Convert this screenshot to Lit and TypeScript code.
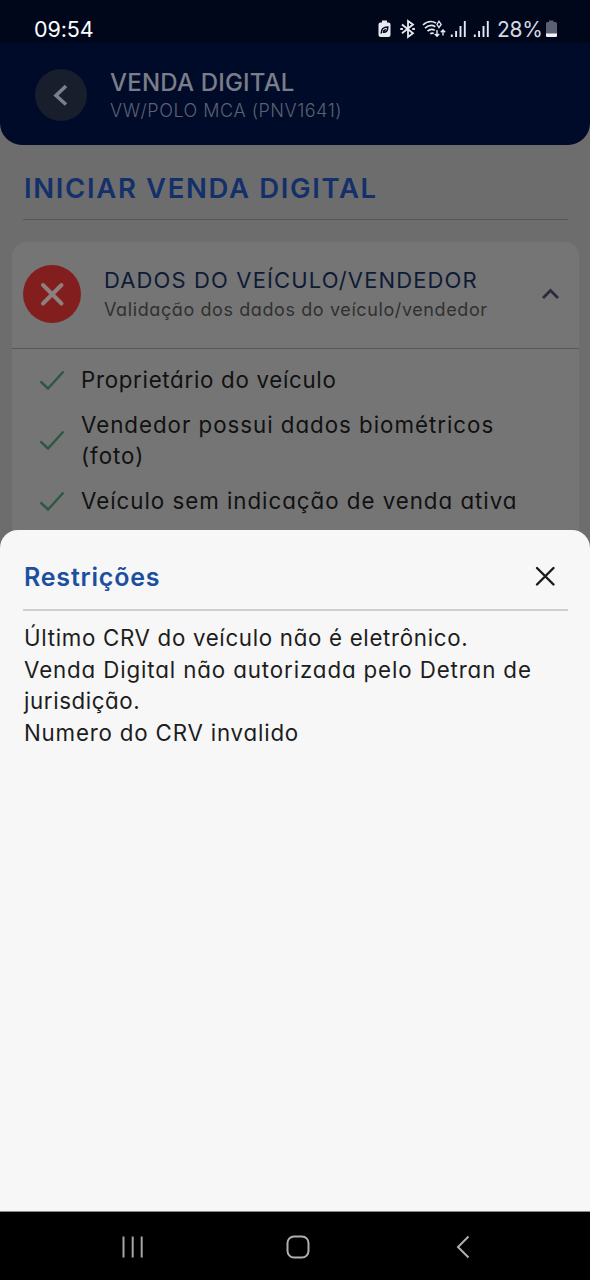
import { LitElement, html, css, svg } from "lit";
import { customElement } from "lit/decorators.js";

@customElement("status-bar")
class StatusBar extends LitElement {
  static styles = css`
    :host { display: flex; height: 43px; padding: 15px 32px 0 34px; box-sizing: border-box; background: #00071a; color: #f2f4fa; justify-content: space-between; }
    .clock { font: 400 21.5px/29px Inter, sans-serif; letter-spacing: -0.1px; color: #fff; }
    .right { display: flex; height: 29px; align-items: center; }
    svg { display: block; }
    .pct { font: 400 21px/29px Inter, sans-serif; letter-spacing: -0.3px; color: #d5d8e2; width: 48px; white-space: nowrap; }
  `;
  render() {
    const bars = (x: number) => svg`<path d="M${x} 22v-2.500M${x + 4.3} 22v-6M${x + 8.7} 22v-11M${x + 13} 22v-16"/>`;
    return html`
      <span class="clock">09:54</span>
      <div class="right">
        <svg width="120" height="29" viewBox="0 0 120 29" fill="none" stroke="#e6e9f2" stroke-width="1.8">
          <g transform="translate(1.500 0)">
            <path d="M3.500 5.500h5v2h1.500a2 2 0 0 1 2 2v10.500a2 2 0 0 1-2 2h-8a2 2 0 0 1-2-2v-10.500a2 2 0 0 1 2-2h1.500z" fill="#e6e9f2" stroke="none"/>
            <path d="M2.700 18.500c0-5 2-6.500 6.600-6.500c0 4-1.600 5.700-5 5.200M4.500 16.300l2.800-2" stroke="#00071a" stroke-width="1.500"/>
          </g>
          <path d="M25 9.500l11 8.800-5 3.700v-16l5 3.500-11 8.800M23.300 14h2.600M35.300 14h2.600" stroke-width="1.800"/>
          <path d="M46 10c4-3.800 9-4.200 13-2M48 13.200c3.500-3 7.300-3.300 10.300-1.500M50.500 16.200c2.200-2 5-2.300 7.300-.8M53.300 18.800c1-.8 2.300-1 3.500-.3" stroke-width="1.700"/>
          <path d="M62 6.300l2.200 3.200-2.200 3-2-3z" stroke-width="1.300"/>
          <path d="M60 15v6M57.800 19l2.200 2.300 2.200-2.300M66 20.500v-5.500M63.800 17.300l2.200-2.300 2.200 2.300" stroke-width="1.400"/>
          <g stroke-width="1.900">${bars(74.800)}${bars(97.800)}</g>
        </svg>
        <span class="pct">28%</span>
        <svg width="13" height="29" viewBox="0 0 13 29">
          <path d="M4 5.500h4.500v1.500h2a1.500 1.500 0 0 1 1.500 1.500v13h-11v-13a1.500 1.500 0 0 1 1.500-1.500h1.500z" fill="#5c6070"/>
          <path d="M1 18.500h11v2a1.500 1.500 0 0 1-1.500 1.500h-8a1.500 1.500 0 0 1-1.500-1.500z" fill="#f2f4fa"/>
        </svg>
      </div>
    `;
  }
}

@customElement("restriction-sheet")
class RestrictionSheet extends LitElement {
  static styles = css`
    :host { display: block; box-sizing: border-box; background: #f7f7f7; border-radius: 18px 18px 0 0; padding: 0 22px 0 23px; }
    .head { display: flex; height: 81px; box-sizing: border-box; padding: 14px 11px 0 1px; align-items: center; justify-content: space-between; border-bottom: 2px solid #cfcfcf; }
    .head svg { display: block; margin-bottom: 2px; }
    .title { font-weight: 600; font-size: 25px; line-height: 32px; color: #1c4f9f; letter-spacing: 0.8px; }
    .body { padding: 11px 0 0 1px; font-size: 22.300px; line-height: 31.600px; color: #1d1d1d; white-space: nowrap; }
    .l1 { letter-spacing: 0.68px; }
    .l2 { letter-spacing: 0.88px; }
    .l3 { letter-spacing: 0.6px; }
    .l4 { letter-spacing: 0.81px; }
  `;
  render() {
    return html`
      <div class="head">
        <span class="title">Restrições</span>
        <svg width="24" height="24" viewBox="0 0 24 24" stroke="#1a1a1a" stroke-width="2.400" stroke-linecap="round"><path d="M4 4l16.500 16.500M20.500 4l-16.500 16.500"/></svg>
      </div>
      <div class="body">
        <div class="l1">Último CRV do veículo não é eletrônico.</div>
        <div class="l2">Venda Digital não autorizada pelo Detran de</div>
        <div class="l3">jurisdição.</div>
        <div class="l4">Numero do CRV invalido</div>
      </div>
    `;
  }
}

@customElement("app-root")
class AppRoot extends LitElement {
  static styles = css`
    :host { display: block; position: relative; width: 590px; height: 1280px; overflow: hidden; background: #6d6d6d; font-family: Inter, "Open Sans", sans-serif; font-feature-settings: "cv11" 1; }
    .header { display: flex; height: 102px; box-sizing: border-box; background: #000b29; border-radius: 0 0 22px 22px; padding: 0 35px; }
    .back { width: 52px; height: 52px; margin-top: 26px; border-radius: 50%; background: #191e2c; }
    .titles { padding: 24px 0 0 23px; white-space: nowrap; }
    .t1 { font-weight: 500; font-size: 24px; line-height: 32px; color: #7b7e88; letter-spacing: 0.2px; }
    .t2 { font-weight: 300; font-size: 18px; line-height: 24px; color: #5b6072; letter-spacing: 0.53px; }
    .section { height: 75px; box-sizing: border-box; margin: 0 22px 0 23px; padding: 24px 0 0 1px; border-bottom: 1.500px solid #555; font-weight: 600; font-size: 27.500px; line-height: 38px; color: #14306a; letter-spacing: 1.650px; white-space: nowrap; }
    .card { margin: 22px 11px 0 12px; height: 300px; background: #757575; border-radius: 14px 14px 0 0; }
    .cardhead { display: flex; height: 107px; box-sizing: border-box; border-bottom: 1.500px solid #575757; padding: 0 19px 3px 11px; align-items: center; }
    .fail { width: 58px; height: 58px; border-radius: 50%; background: #831e1e; }
    .names { flex: 1; padding: 1px 0 0 23px; white-space: nowrap; }
    .n1 { font-size: 22px; line-height: 31px; color: #0d1b36; letter-spacing: 1.130px; font-weight: 400; }
    .n2 { font-size: 18px; line-height: 28px; color: #303030; letter-spacing: 0.600px; }
    .list { display: flex; flex-direction: column; gap: 14px; padding: 15px 0 0 28px; }
    .item { display: flex; align-items: center; font-size: 22.300px; line-height: 31px; color: #111; white-space: nowrap; }
    .item svg { margin-right: 16px; }
    .tight { letter-spacing: 0.7px; }
    .wide { letter-spacing: 0.98px; }
    svg { display: block; fill: none; stroke-linecap: round; }
    .sheet { position: absolute; left: 0; right: 0; top: 530px; bottom: 69px; }
    .nav { position: absolute; left: 0; right: 0; bottom: 0; height: 69px; box-sizing: border-box; border-top: 1px solid #888; background: #000; display: flex; justify-content: space-between; align-items: center; padding: 1px 119px 0 121px; }
  `;
  check() {
    return html`<svg width="25" height="22" viewBox="0 0 25 22" stroke="#2d5843" stroke-width="2.400"><path d="M.5 12.500l7.500 7L23.500 2.500" stroke-linecap="butt"/></svg>`;
  }
  render() {
    return html`
      <status-bar></status-bar>
      <div class="header">
        <svg class="back" viewBox="0 0 52 52" stroke="#7c7f88" stroke-width="3.600"><path d="M31 17L21 26.500L31 35.500" stroke-linecap="butt"/></svg>
        <div class="titles">
          <div class="t1">VENDA DIGITAL</div>
          <div class="t2">VW/POLO MCA (PNV1641)</div>
        </div>
      </div>
      <div class="section">INICIAR VENDA DIGITAL</div>
      <div class="card">
        <div class="cardhead">
          <svg class="fail" viewBox="0 0 58 58" stroke="#8e7f7f" stroke-width="4"><path d="M20 20l18.500 18.500M38.500 20l-18.500 18.500"/></svg>
          <div class="names">
            <div class="n1">DADOS DO VEÍCULO/VENDEDOR</div>
            <div class="n2">Validação dos dados do veículo/vendedor</div>
          </div>
          <svg width="20" height="20" viewBox="0 0 20 20" stroke="#2b2b3c" stroke-width="2.800"><path d="M3 14l7.500-7.500l7.500 7.500" stroke-linecap="butt"/></svg>
        </div>
        <div class="list">
          <div class="item tight">${this.check()}<span>Proprietário do veículo</span></div>
          <div class="item wide">${this.check()}<span>Vendedor possui dados biométricos<br />(foto)</span></div>
          <div class="item wide">${this.check()}<span>Veículo sem indicação de venda ativa</span></div>
        </div>
      </div>
      <restriction-sheet class="sheet"></restriction-sheet>
      <div class="nav">
        <svg width="24" height="24" viewBox="0 0 24 24" stroke="#a5a5a5" stroke-width="2"><path d="M2.500 1.500v21M11.700 1.500v21M20.700 1.500v21" stroke-linecap="butt"/></svg>
        <svg width="24" height="24" viewBox="0 0 24 24" stroke="#b0b0b0" stroke-width="2"><rect x="1.500" y="1.500" width="21" height="21" rx="6.500"/></svg>
        <svg width="20" height="24" viewBox="0 0 20 24" stroke="#b0b0b0" stroke-width="2"><path d="M17.500 1.500L7 12l10.500 10.500" stroke-linecap="butt"/></svg>
      </div>
    `;
  }
}
